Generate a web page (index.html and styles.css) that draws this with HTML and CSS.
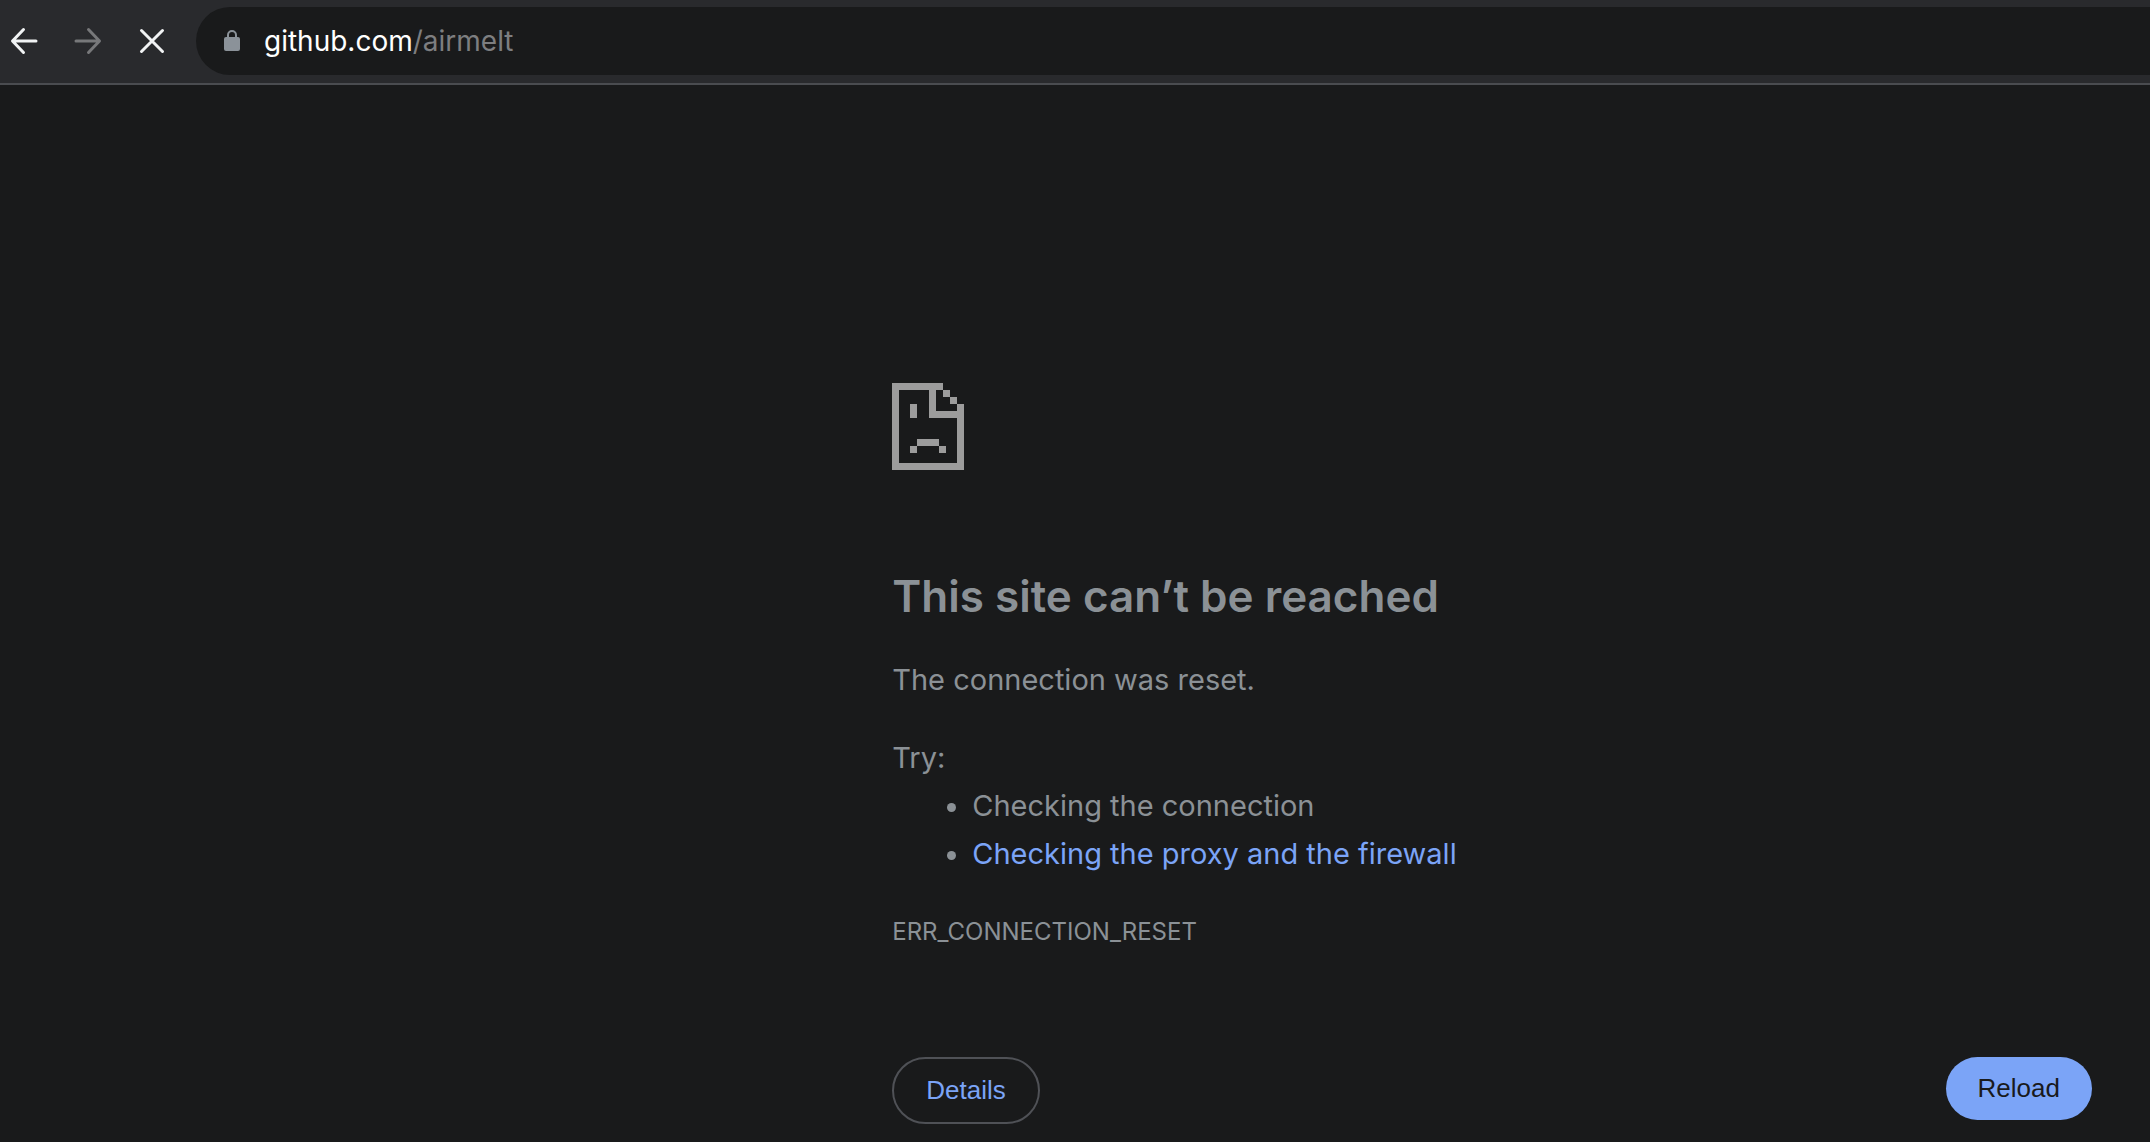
FILE: index.html
```html
<!DOCTYPE html>
<html lang="en">
<head>
<meta charset="utf-8">
<title>github.com</title>
<link rel="stylesheet" href="styles.css">
</head>
<body>
<header class="toolbar">
  <nav class="nav" aria-label="Navigation">
    <button class="nav-button" type="button" aria-label="Back">
      <svg class="nav-icon" viewBox="0 0 28 28"><path d="M26 14H3M13.500 2.500L2.500 14l11 11.500"/></svg>
    </button>
    <button class="nav-button" type="button" aria-label="Forward" disabled>
      <svg class="nav-icon" viewBox="0 0 28 28"><path d="M2 14h23M14.500 2.500L25.500 14l-11 11.500"/></svg>
    </button>
    <button class="nav-button" type="button" aria-label="Stop loading">
      <svg class="nav-icon" viewBox="0 0 28 28"><path d="M3.500 3.500l21 21M24.500 3.500l-21 21"/></svg>
    </button>
  </nav>
  <div class="omnibox">
    <svg class="lock" viewBox="0 0 16 22" aria-hidden="true">
      <path class="lock-shackle" d="M4 8V5a4 4 0 0 1 8 0v3"/>
      <rect class="lock-body" y="7" width="16" height="14" rx="2"/>
    </svg>
    <div class="address" role="textbox" aria-label="Address" contenteditable="true" spellcheck="false">github.com<span class="path">/airmelt</span></div>
  </div>
</header>
<main class="error-page">
  <svg class="sad-page" viewBox="0 0 72 87" shape-rendering="crispEdges" aria-hidden="true">
    <path d="M0 0h51v7H44v21h21V21h7v66H0zM7 7v73h58V35H37V7z" fill-rule="evenodd"/>
    <path d="M51 7h7v7h-7zM58 14h7v7h-7zM18 21h7v14h-7zM25 56h22v7H25zM18 63h7v7h-7zM47 63h7v7h-7z"/>
  </svg>
  <h1 class="title">This site can’t be reached</h1>
  <p class="summary">The connection was reset.</p>
  <div class="suggestions">
    <p class="try">Try:</p>
    <ul class="list">
      <li>Checking the connection</li>
      <li><a class="link" href="#firewall">Checking the proxy and the firewall</a></li>
    </ul>
  </div>
  <p class="code">ERR_CONNECTION_RESET</p>
  <div class="actions">
    <button class="button details" type="button">Details</button>
    <button class="button reload" type="button">Reload</button>
  </div>
</main>
</body>
</html>
```

FILE: styles.css
```css
* {
  box-sizing: border-box;
}

body {
  margin: 0;
  min-height: 100vh;
  background: #191a1b;
  color: #8b9196;
  font-family: Inter, "Liberation Sans", sans-serif;
  font-size: 29px;
  line-height: 48px;
}

.toolbar {
  display: flex;
  align-items: center;
  gap: 24px;
  padding: 7px 0 8px 4px;
  background: #292a2d;
  border-bottom: 2px solid #4a4c50;
}

.nav {
  display: flex;
  gap: 24px;
}

.nav-button {
  display: grid;
  place-items: center;
  width: 40px;
  height: 40px;
  padding: 0;
  border: 0;
  background: none;
  color: #f1f3f4;
}

.nav-button:disabled {
  color: #77787a;
}

.nav-icon {
  width: 28px;
  height: 28px;
  fill: none;
  stroke: currentColor;
  stroke-width: 3;
  stroke-linecap: round;
  stroke-linejoin: round;
}

.omnibox {
  display: flex;
  flex: 1;
  align-items: center;
  gap: 24px;
  height: 68px;
  padding-left: 28px;
  border-radius: 34px 0 0 34px;
  background: #191a1b;
}

.lock {
  width: 16px;
  height: 22px;
}

.lock-shackle {
  fill: none;
  stroke: #8b9299;
  stroke-width: 2;
}

.lock-body {
  fill: #8b9299;
}

.address {
  flex: 1;
  color: #fff;
  font-size: 28px;
  outline: none;
}

.path {
  color: #7d7e80;
}

.error-page {
  padding: 298px 58px 18px 41.5%;
}

.sad-page {
  display: block;
  width: 72px;
  height: 87px;
  fill: #9c9c9c;
}

.title {
  margin: 98px 0 32px;
  font-size: 44px;
  font-weight: 600;
  line-height: 56px;
}

.summary,
.try,
.code {
  margin: 0;
}

.suggestions {
  margin: 30px 0;
}

.list {
  margin: 0;
  padding-left: 80px;
}

.link {
  color: #7ba4f7;
  text-decoration: none;
}

.code {
  font-size: 24px;
}

.actions {
  display: flex;
  align-items: flex-start;
  justify-content: space-between;
  margin-top: 101px;
}

.button {
  padding: 0 32px;
  border: 0;
  border-radius: 34px;
  font-family: "Liberation Sans", Arial, sans-serif;
  font-size: 26px;
  line-height: 63px;
}

.details {
  border: 2px solid #4f5156;
  background: none;
  color: #7ba4f7;
}

.reload {
  background: #7ba4f7;
  color: #191a1b;
}
```
